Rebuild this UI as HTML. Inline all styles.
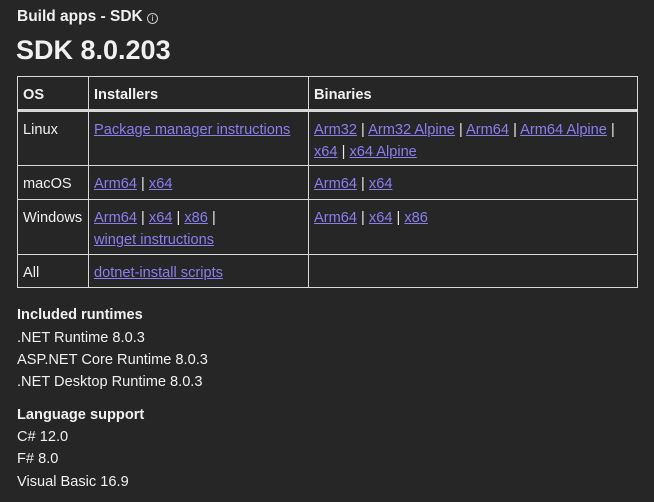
<!DOCTYPE html>
<html><head><meta charset="utf-8"><style>
html,body{margin:0;padding:0;background:#262626;width:654px;height:502px;overflow:hidden}
body{font-family:"Liberation Sans",sans-serif;color:#f0f0f0;font-size:14.6px;position:relative}
.a{position:absolute;white-space:nowrap}
a{color:#8a7ef0;text-decoration:underline}
.sep{color:#e8e8e8}
table{position:absolute;left:17px;top:76px;width:621px;border-collapse:collapse}
td,th{border:1px solid #d8d8d8;vertical-align:top;text-align:left;padding:7px 5px 0 5px;line-height:22px;font-size:14.6px;box-sizing:border-box;white-space:nowrap}
th{font-weight:bold;padding:7px 5px 0}
tr.h{border-bottom:3px solid #d8d8d8}
</style></head><body>
<div class="a" style="left:17px;top:8px;font-size:15.5px;font-weight:bold">Build apps - SDK <span style="display:inline-block;width:9px;height:9px;border:1px solid #ccc;border-radius:50%;font-size:8px;line-height:9px;text-align:center;font-weight:normal;vertical-align:0">i</span></div>
<div class="a" style="left:16px;top:35px;font-size:27px;font-weight:bold">SDK 8.0.203</div>
<table>
<tr class="h" style="height:34px"><th style="width:71px">OS</th><th style="width:220px">Installers</th><th>Binaries</th></tr>
<tr style="height:55px"><td>Linux</td><td><a>Package manager instructions</a></td><td><a>Arm32</a> <span class="sep">|</span> <a>Arm32 Alpine</a> <span class="sep">|</span> <a>Arm64</a> <span class="sep">|</span> <a>Arm64 Alpine</a> <span class="sep">|</span><br><a>x64</a> <span class="sep">|</span> <a>x64 Alpine</a></td></tr>
<tr style="height:34px"><td>macOS</td><td><a>Arm64</a> <span class="sep">|</span> <a>x64</a></td><td><a>Arm64</a> <span class="sep">|</span> <a>x64</a></td></tr>
<tr style="height:55px"><td>Windows</td><td><a>Arm64</a> <span class="sep">|</span> <a>x64</a> <span class="sep">|</span> <a>x86</a> <span class="sep">|</span><br><a>winget instructions</a></td><td><a>Arm64</a> <span class="sep">|</span> <a>x64</a> <span class="sep">|</span> <a>x86</a></td></tr>
<tr style="height:33px"><td>All</td><td><a>dotnet-install scripts</a></td><td></td></tr>
</table>
<div class="a" style="left:17px;top:307px;font-weight:bold">Included runtimes</div>
<div class="a" style="left:17px;top:330px">.NET Runtime 8.0.3</div>
<div class="a" style="left:17px;top:352px">ASP.NET Core Runtime 8.0.3</div>
<div class="a" style="left:17px;top:374px">.NET Desktop Runtime 8.0.3</div>
<div class="a" style="left:17px;top:407px;font-weight:bold">Language support</div>
<div class="a" style="left:17px;top:429px">C# 12.0</div>
<div class="a" style="left:17px;top:451px">F# 8.0</div>
<div class="a" style="left:17px;top:474px">Visual Basic 16.9</div>
</body></html>
